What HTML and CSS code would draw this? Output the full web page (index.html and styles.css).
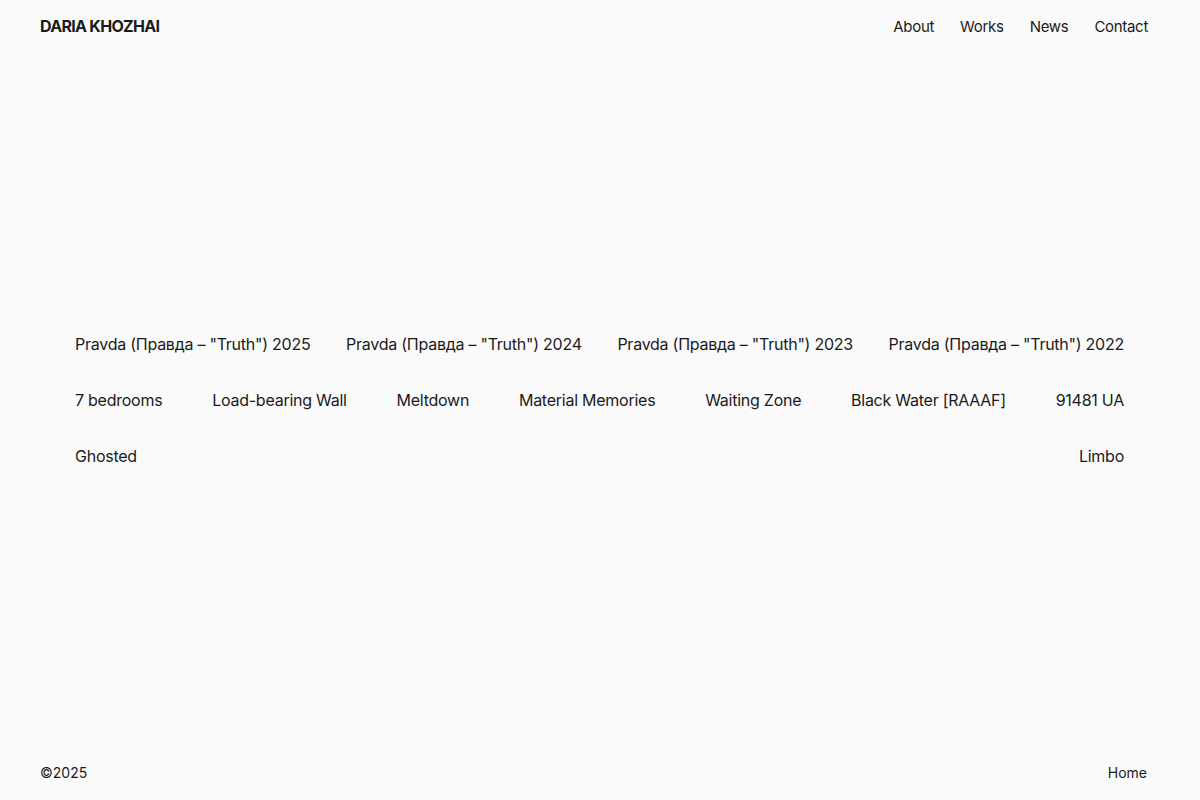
FILE: index.html
```html
<!DOCTYPE html>
<html lang="en">
<head>
<meta charset="utf-8">
<title>Daria Khozhai</title>
<link rel="stylesheet" href="styles.css">
</head>
<body>
<div class="page">
  <header class="header">
    <a class="logo" href="#">DARIA KHOZHAI</a>
    <nav class="nav">
      <a href="#">About</a>
      <a href="#">Works</a>
      <a href="#">News</a>
      <a href="#">Contact</a>
    </nav>
  </header>
  <main class="works">
    <div class="row">
      <a href="#">Pravda (Правда – "Truth") 2025</a>
      <a href="#">Pravda (Правда – "Truth") 2024</a>
      <a href="#">Pravda (Правда – "Truth") 2023</a>
      <a href="#">Pravda (Правда – "Truth") 2022</a>
    </div>
    <div class="row">
      <a href="#">7 bedrooms</a>
      <a href="#">Load-bearing Wall</a>
      <a href="#">Meltdown</a>
      <a href="#">Material Memories</a>
      <a href="#">Waiting Zone</a>
      <a href="#">Black Water [RAAAF]</a>
      <a href="#">91481 UA</a>
    </div>
    <div class="row">
      <a href="#">Ghosted</a>
      <a href="#">Limbo</a>
    </div>
  </main>
  <footer class="footer">
    <span>©2025</span>
    <a href="#">Home</a>
  </footer>
</div>
</body>
</html>
```
FILE: styles.css
```css
* { box-sizing: border-box; }
html, body { margin: 0; padding: 0; }
body {
  background: #fafafa;
  color: #1a1a1a;
  font-family: Inter, "Noto Sans", sans-serif;
}
a { color: inherit; text-decoration: none; }
.page {
  height: 800px;
  display: flex;
  flex-direction: column;
}
.header {
  display: flex;
  justify-content: space-between;
  align-items: center;
  height: 52px;
  padding: 0 52px 0 40px;
}
.logo {
  font-weight: 700;
  font-size: 16px;
  letter-spacing: -0.7px;
}
.nav {
  display: flex;
  gap: 26px;
  font-size: 15px;
  letter-spacing: -0.3px;
}
.works {
  flex: 1;
  display: flex;
  flex-direction: column;
  justify-content: center;
  padding: 4px 76px 0 75px;
}
.row {
  display: flex;
  justify-content: space-between;
  height: 56px;
  align-items: center;
  font-size: 16px;
  letter-spacing: -0.25px;
}
.footer {
  display: flex;
  justify-content: space-between;
  align-items: center;
  height: 56px;
  padding: 0 53px 0 40px;
  font-size: 14px;
}
```
